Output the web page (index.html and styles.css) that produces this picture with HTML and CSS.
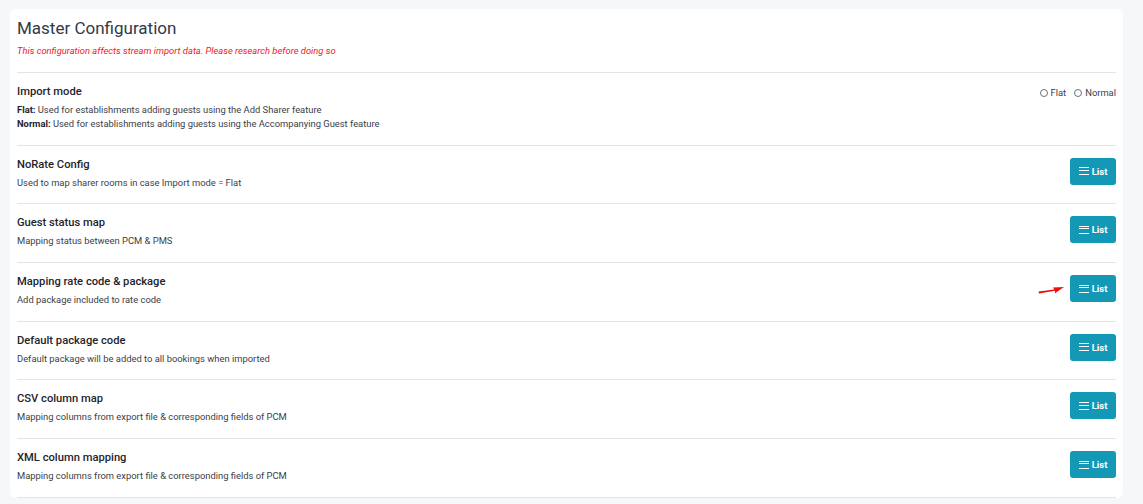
FILE: index.html
```html
<!DOCTYPE html>
<html lang="en">
<head>
    <meta charset="UTF-8">
    <meta name="viewport" content="width=device-width, initial-scale=1.0">
    <title>Master Configuration</title>
    <link rel="stylesheet" href="styles.css">
</head>
<body>
    <div class="card">
        <div class="card-header">
            <h1>Master Configuration</h1>
            <p class="warning">This configuration affects stream import data. Please research before doing so</p>
        </div>

        <div class="config-row">
            <div class="config-info">
                <h3>Import mode</h3>
                <p><strong>Flat:</strong> Used for establishments adding guests using the Add Sharer feature</p>
                <p><strong>Normal:</strong> Used for establishments adding guests using the Accompanying Guest feature</p>
            </div>
            <div class="radio-group">
                <label><input type="radio" name="importMode" value="flat"> Flat</label>
                <label><input type="radio" name="importMode" value="normal"> Normal</label>
            </div>
        </div>

        <div class="config-row">
            <div class="config-info">
                <h3>NoRate Config</h3>
                <p>Used to map sharer rooms in case Import mode = Flat</p>
            </div>
            <div class="action">
                <button class="btn-list"><span class="bars"></span>List</button>
            </div>
        </div>

        <div class="config-row">
            <div class="config-info">
                <h3>Guest status map</h3>
                <p>Mapping status between PCM &amp; PMS</p>
            </div>
            <div class="action">
                <button class="btn-list"><span class="bars"></span>List</button>
            </div>
        </div>

        <div class="config-row">
            <div class="config-info">
                <h3>Mapping rate code &amp; package</h3>
                <p>Add package included to rate code</p>
            </div>
            <div class="action">
                <svg class="pointer" width="28" height="12" viewBox="0 0 28 12">
                    <path d="M1 9.5 L17 6.8 L17 9.2 L26 3 L15 3.4 L16.3 5.6 L0.5 7.6 Z" fill="#f00d0d"/>
                </svg>
                <button class="btn-list"><span class="bars"></span>List</button>
            </div>
        </div>

        <div class="config-row">
            <div class="config-info">
                <h3>Default package code</h3>
                <p>Default package will be added to all bookings when imported</p>
            </div>
            <div class="action">
                <button class="btn-list"><span class="bars"></span>List</button>
            </div>
        </div>

        <div class="config-row">
            <div class="config-info">
                <h3>CSV column map</h3>
                <p>Mapping columns from export file &amp; corresponding fields of PCM</p>
            </div>
            <div class="action">
                <button class="btn-list"><span class="bars"></span>List</button>
            </div>
        </div>

        <div class="config-row">
            <div class="config-info">
                <h3>XML column mapping</h3>
                <p>Mapping columns from export file &amp; corresponding fields of PCM</p>
            </div>
            <div class="action">
                <button class="btn-list"><span class="bars"></span>List</button>
            </div>
        </div>
    </div>
</body>
</html>
```

FILE: styles.css
```css
:root {
    --page-bg: #f6f7f9;
    --card-bg: #ffffff;
    --heading: #2f3a4a;
    --text: #1f242b;
    --muted: #3b4048;
    --border: #e3e4e6;
    --info: #1399b5;
    --danger: #f01818;
}

* {
    margin: 0;
    padding: 0;
    box-sizing: border-box;
}

body {
    font-family: Roboto, "Liberation Sans", Arial, sans-serif;
    background: var(--page-bg);
    color: var(--text);
    padding: 9px 20px 0 10px;
}

.card {
    background: var(--card-bg);
    border-radius: 6px;
    padding: 7px 7px 0 7px;
}

.card-header {
    border-bottom: 1px solid var(--border);
    padding-bottom: 14px;
}

.card-header h1 {
    font-size: 17px;
    font-weight: 400;
    line-height: 24px;
    color: var(--heading);
}

.warning {
    margin-top: 4px;
    font-size: 9.4px;
    font-style: italic;
    line-height: 14px;
    color: var(--danger);
}

.config-row {
    display: flex;
    justify-content: space-between;
    align-items: flex-start;
    padding: 11px 0 13.7px;
    border-bottom: 1px solid var(--border);
}

.config-info h3 {
    font-size: 11.2px;
    font-weight: 500;
    line-height: 16px;
    color: var(--text);
    margin-bottom: 3px;
}

.config-info p {
    font-size: 9.4px;
    line-height: 14px;
    color: var(--muted);
}

.config-info p strong {
    font-weight: 700;
    color: var(--text);
}

.radio-group {
    display: flex;
    gap: 8px;
    font-size: 9.4px;
    color: var(--muted);
    padding-top: 3px;
}

.radio-group label {
    display: flex;
    align-items: center;
    gap: 3px;
}

.radio-group input {
    appearance: none;
    width: 8px;
    height: 8px;
    border: 1px solid #6b6f75;
    border-radius: 50%;
    margin: 0;
}

.action {
    position: relative;
    padding-top: 1px;
}

.pointer {
    position: absolute;
    left: -32px;
    top: 10px;
}

.btn-list {
    display: flex;
    align-items: center;
    gap: 3px;
    width: 46px;
    height: 27px;
    justify-content: center;
    background: var(--info);
    color: white;
    border: none;
    border-radius: 3px;
    font-family: inherit;
    font-size: 9.5px;
    font-weight: 700;
}

.bars {
    width: 10px;
    height: 8px;
    border-top: 1.6px solid white;
    border-bottom: 1.6px solid white;
    position: relative;
}

.bars::after {
    content: "";
    position: absolute;
    left: 0;
    right: 0;
    top: 1.6px;
    border-top: 1.6px solid white;
}
```
